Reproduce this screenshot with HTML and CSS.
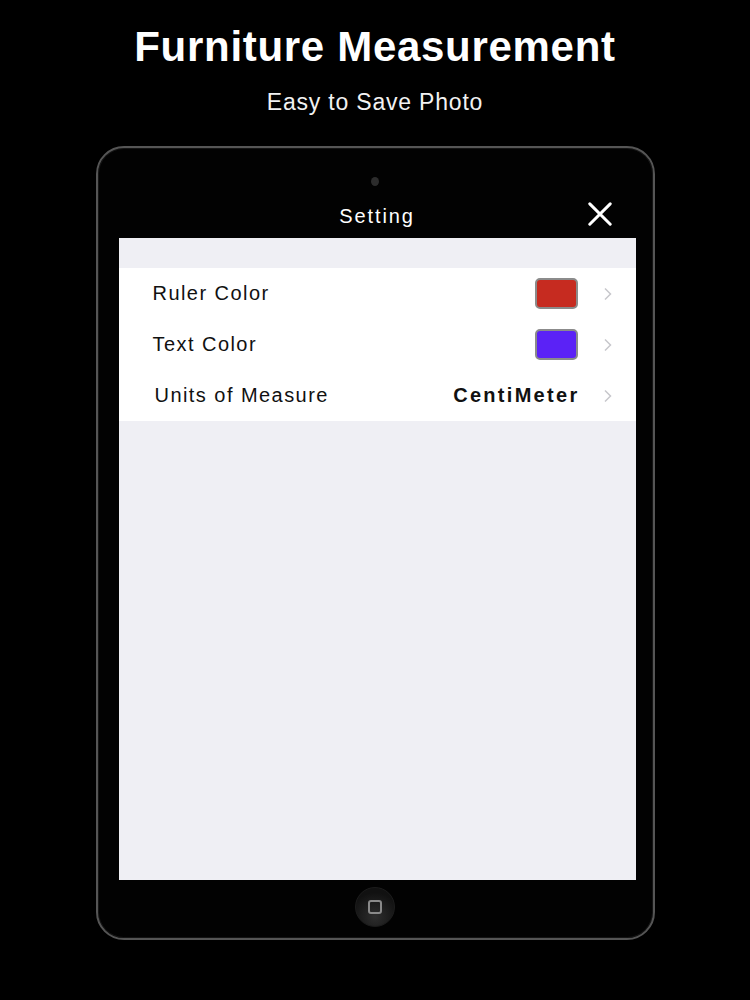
FILE: index.html
```html
<!DOCTYPE html>
<html>
<head>
<meta charset="utf-8">
<link rel="stylesheet" href="styles.css">
</head>
<body>
<div class="page">
  <header class="hero">
    <h1 class="title">Furniture Measurement</h1>
    <p class="subtitle">Easy to Save Photo</p>
  </header>
  <div class="device">
    <div class="bezel-top">
      <div class="camera"></div>
      <div class="navbar">
        <span class="nav-title">Setting</span>
        <svg class="close" viewBox="0 0 28 28" width="28" height="26">
          <path d="M3 2 L25 24 M25 2 L3 24" stroke="#fff" stroke-width="3.2" stroke-linecap="round"/>
        </svg>
      </div>
    </div>
    <div class="screen">
      <div class="list">
        <div class="row">
          <span class="label">Ruler Color</span>
          <span class="swatch red"></span>
          <svg class="chev" viewBox="0 0 10 16" width="10" height="16"><path d="M2 2.5 L7.5 8 L2 13.5" fill="none" stroke="#c7c7cc" stroke-width="1.5"/></svg>
        </div>
        <div class="row">
          <span class="label">Text Color</span>
          <span class="swatch purple"></span>
          <svg class="chev" viewBox="0 0 10 16" width="10" height="16"><path d="M2 2.5 L7.5 8 L2 13.5" fill="none" stroke="#c7c7cc" stroke-width="1.5"/></svg>
        </div>
        <div class="row">
          <span class="label units">Units of Measure</span>
          <span class="value">CentiMeter</span>
          <svg class="chev" viewBox="0 0 10 16" width="10" height="16"><path d="M2 2.5 L7.5 8 L2 13.5" fill="none" stroke="#c7c7cc" stroke-width="1.5"/></svg>
        </div>
      </div>
    </div>
    <div class="bezel-bottom">
      <div class="home"><div class="home-square"></div></div>
    </div>
  </div>
</div>
</body>
</html>
```
FILE: styles.css
```css
html, body {
  margin: 0;
  padding: 0;
  background: #000;
}
.page {
  width: 750px;
  height: 1000px;
  background: #000;
  display: flex;
  flex-direction: column;
  align-items: center;
  font-family: "Liberation Sans", Arial, sans-serif;
  color: #fff;
}
.hero {
  display: flex;
  flex-direction: column;
  align-items: center;
  padding-top: 24px;
  height: 119px;
  box-sizing: border-box;
}
.title {
  margin: 0 0 0 0;
  font-size: 42px;
  font-weight: 700;
  line-height: 46px;
  letter-spacing: 0.7px;
}
.subtitle {
  margin: 19px 0 0 0;
  font-size: 23px;
  line-height: 26px;
  letter-spacing: 0.8px;
  color: #f2f2f2;
}
.device {
  margin-top: 27px;
  width: 559px;
  height: 794px;
  box-sizing: border-box;
  border: 2px solid #555;
  border-radius: 28px;
  background: #020202;
  display: flex;
  flex-direction: column;
  align-items: center;
  box-shadow: inset 0 0 0 1px #141414;
}
.bezel-top {
  height: 90px;
  width: 517px;
  margin-left: 4px;
  display: flex;
  flex-direction: column;
  align-items: center;
}
.camera {
  margin-top: 29px;
  width: 8px;
  height: 9px;
  border-radius: 50%;
  background: #2c2c2c;
  margin-left: -4px;
}
.navbar {
  position: relative;
  width: 517px;
  margin-top: 16px;
  height: 28px;
  display: flex;
  justify-content: center;
  align-items: center;
}
.nav-title {
  font-size: 20px;
  font-weight: 400;
  letter-spacing: 1.9px;
}
.close {
  position: absolute;
  right: 22px;
  top: 0px;
}
.screen {
  width: 517px;
  height: 642px;
  margin-left: 4px;
  background: #efeff4;
  padding-top: 30px;
  box-sizing: border-box;
}
.list {
  background: #fff;
  display: flex;
  flex-direction: column;
}
.row {
  height: 51px;
  display: flex;
  align-items: center;
  padding-left: 34px;
  padding-right: 23px;
  color: #111;
}
.label {
  flex: 1;
  font-size: 20px;
  letter-spacing: 1.45px;
}
.units {
  padding-left: 2px;
}
.swatch {
  width: 39px;
  height: 27px;
  border: 2px solid #8b8b8b;
  border-radius: 5px;
}
.red { background: #c62b20; }
.purple { background: #5b22f6; }
.value {
  font-size: 20px;
  font-weight: 700;
  letter-spacing: 2.3px;
  margin-right: -2px;
}
.chev {
  margin-left: 25px;
}
.bezel-bottom {
  flex: 1;
  display: flex;
  align-items: center;
  justify-content: center;
}
.home {
  width: 38px;
  height: 38px;
  border-radius: 50%;
  background: radial-gradient(circle at 50% 75%, #2e2e2e, #111 70%);
  border: 1px solid #1c1c1c;
  display: flex;
  align-items: center;
  justify-content: center;
  margin-bottom: 4px;
}
.home-square {
  width: 10px;
  height: 10px;
  border: 2px solid #8a8a8a;
  border-radius: 3px;
}
```
